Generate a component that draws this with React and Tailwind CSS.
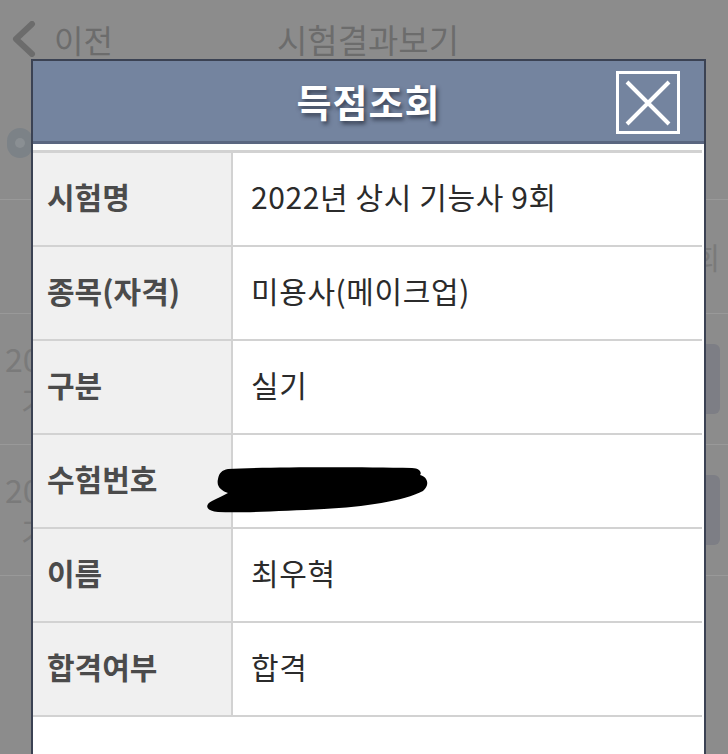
import { useState } from 'react';

const rows = [
  { label: '시험명', value: '2022년 상시 기능사 9회' },
  { label: '종목(자격)', value: '미용사(메이크업)' },
  { label: '구분', value: '실기' },
  { label: '수험번호', value: '', hidden: true },
  { label: '이름', value: '최우혁' },
  { label: '합격여부', value: '합격' },
];

const font = { fontFamily: '"Noto Sans CJK KR", "Noto Sans", sans-serif' };

export default function App() {
  const [open, setOpen] = useState(true);

  return (
    <div className="relative w-[728px] h-[754px] overflow-hidden bg-[#8c8c8c]" style={font}>
      {/* Page behind the dialog */}
      <div className="flex items-center h-[78px] pl-[10px]">
        <div className="flex items-center gap-[18px] w-[200px] text-[#6c6c6c]">
          <svg width="26" height="36" viewBox="0 0 26 36" fill="none">
            <path d="M22 3 L6 18 L22 33" stroke="#6c6c6c" strokeWidth="6" strokeLinecap="round" strokeLinejoin="round" />
          </svg>
          <span className="text-[32px] leading-none">이전</span>
        </div>
        <div className="flex-1 text-center pr-[210px] pl-[8px] text-[33px] leading-none text-[#6c6c6c]">시험결과보기</div>
      </div>
      <div className="h-[122px] border-b border-[#999999] px-[7px] pt-[50px]">
        <div className="w-[26px] h-[30px] rounded-full bg-[#7c8287] flex items-center justify-center">
          <div className="w-[10px] h-[10px] rounded-full bg-[#8a8f93]"></div>
        </div>
      </div>
      <div className="h-[114px] border-b border-[#999999] flex justify-end items-center pr-[8px] text-[30px] text-[#7a7a7a]">회</div>
      {[0, 1].map((i) => (
        <div key={i} className="h-[131px] border-b border-[#999999] flex justify-between items-center pl-[5px] pr-[8px]">
          <div className="text-[32px] leading-[42px] text-[#7a7a7a]">
            <div>2022</div>
            <div className="pl-[16px]">기</div>
          </div>
          <div className="w-[30px] h-[70px] rounded-[6px] bg-[#7d7e85]"></div>
        </div>
      ))}

      {/* Dialog */}
      {open && (
        <div className="absolute left-[31px] top-[59px] w-[675px] h-[700px] bg-white border-2 border-b-0 border-[#3b4253]">
          <div className="relative h-[83px] bg-[#74849f] border-b-[3px] border-[#5a6680] flex items-center justify-center">
            <h1
              className="text-[38px] font-bold text-white leading-none tracking-[1px]"
              style={{ textShadow: '2px 3px 4px rgba(30,35,50,0.7)' }}
            >
              득점조회
            </h1>
            <button
              onClick={() => setOpen(false)}
              className="absolute right-[24px] top-[10px] w-[64px] h-[63px] border-[3px] border-white flex items-center justify-center"
            >
              <svg width="48" height="46" viewBox="0 0 48 46">
                <path d="M3 2 L45 44 M45 2 L3 44" stroke="white" strokeWidth="4" />
              </svg>
            </button>
          </div>

          <div className="pt-[6px] pr-[2px]">
            <div className="border-t-[3px] border-[#d2d2d2]">
              {rows.map((row) => (
                <div key={row.label} className="relative flex h-[94px] border-b-2 border-[#d2d2d2]">
                  <div className="w-[200px] bg-[#f0f0f0] border-r-2 border-[#d2d2d2] flex items-center pl-[14px] pb-[5px] text-[30px] font-bold text-[#4b4b4b]">
                    {row.label}
                  </div>
                  <div className="flex-1 flex items-center pl-[18px] pb-[5px] text-[30px] tracking-[0.6px] text-[#2b2b2b]">
                    {row.value}
                  </div>
                  {row.hidden && (
                    <svg className="absolute left-[171px] top-[30px]" width="230" height="50" viewBox="0 0 230 50">
                      <path
                        d="M24 4 C60 2 150 2 208 3 C216 3 218 8 216 10 C224 12 226 20 219 26 C200 36 160 42 120 44 C80 46 40 48 14 47 C2 46 0 40 8 36 C14 33 20 30 24 28 C18 26 12 22 14 14 C15 8 18 5 24 4 Z"
                        fill="black"
                      />
                    </svg>
                  )}
                </div>
              ))}
            </div>
          </div>
        </div>
      )}
    </div>
  );
}
